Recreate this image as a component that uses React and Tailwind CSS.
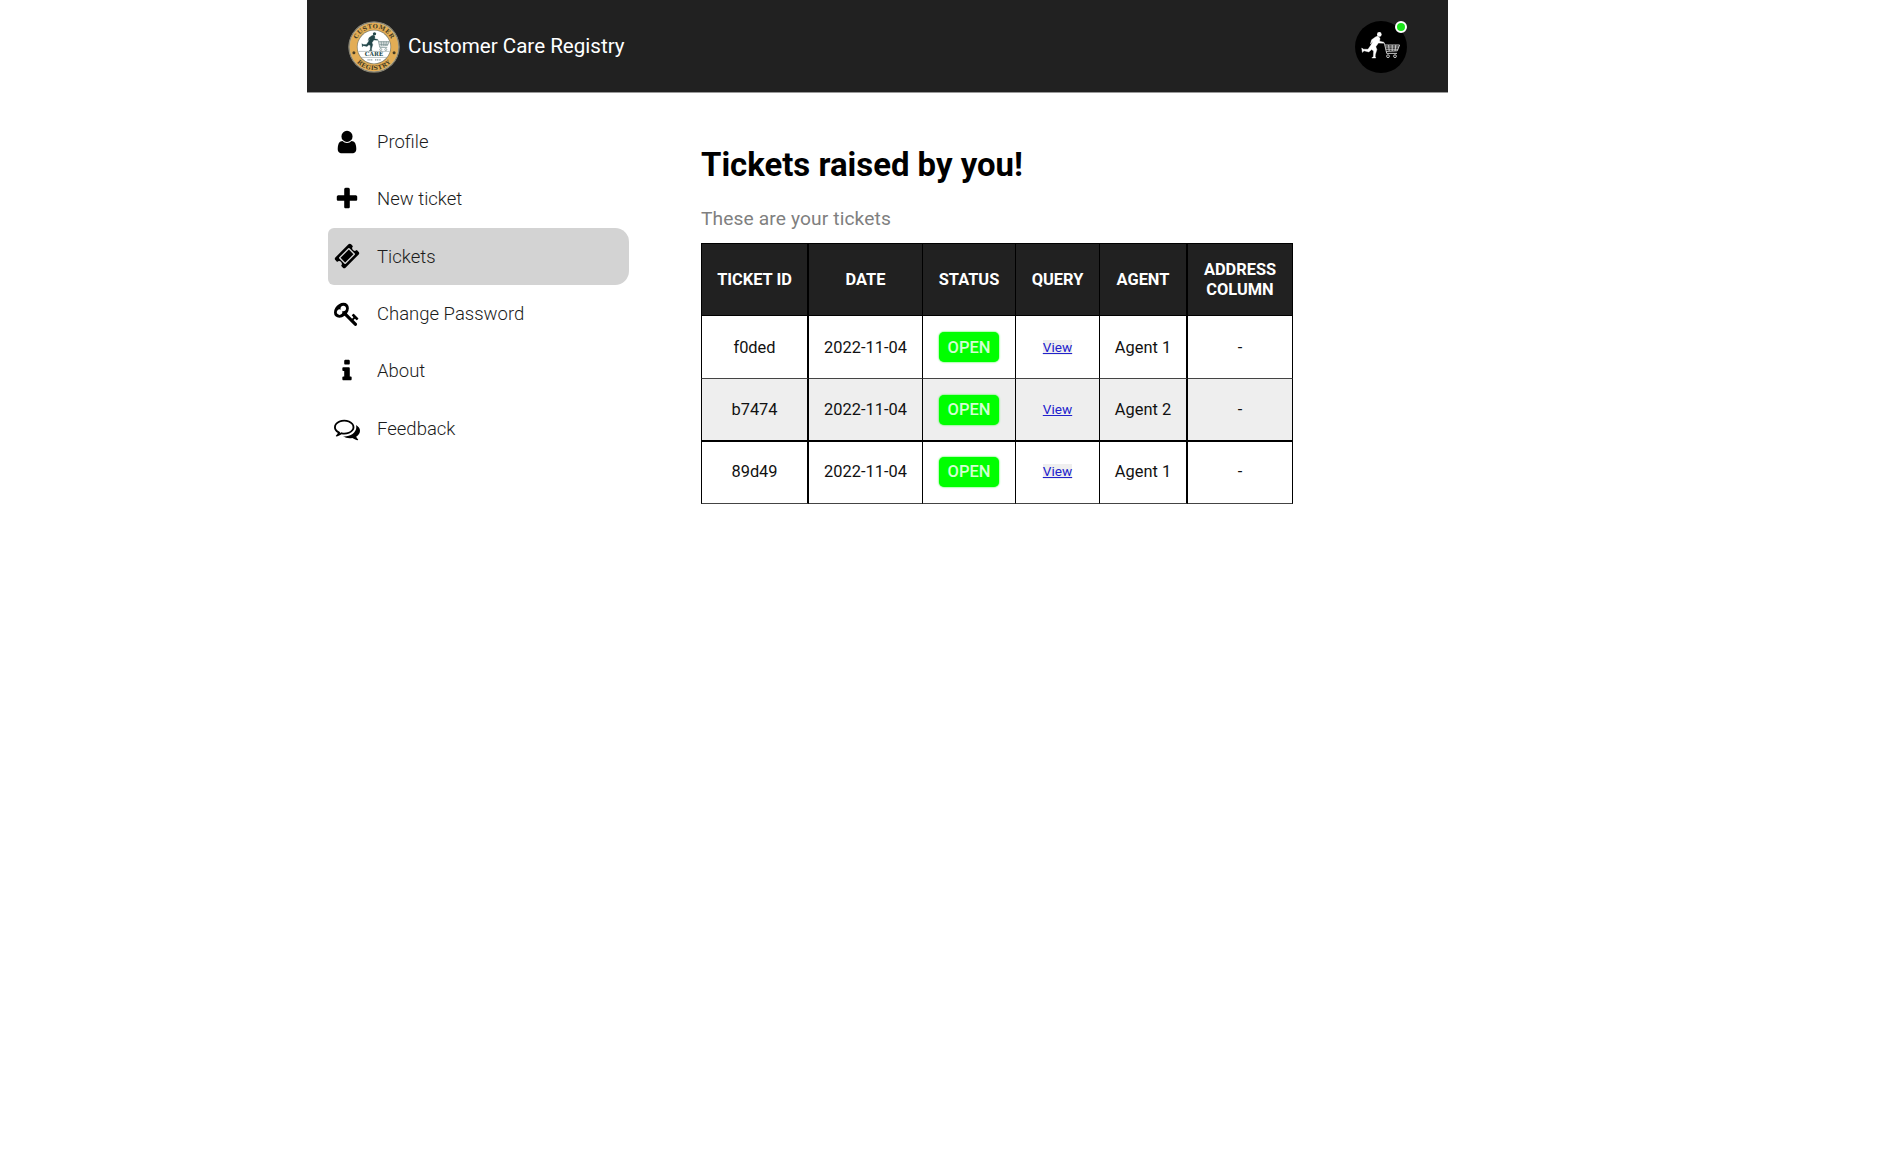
import React from "react";

const icons = {
  user: "M1536 1399q0 109-62.5 187t-150.5 78h-854q-88 0-150.5-78t-62.5-187q0-85 8.5-160.5t31.5-152 58.5-131 94-89 134.5-34.5q131 128 313 128t313-128q76 0 134.5 34.5t94 89 58.5 131 31.5 152 8.5 160.5zm-256-887q0 159-112.5 271.5t-271.5 112.5-271.5-112.5-112.5-271.5 112.5-271.5 271.5-112.5 271.5 112.5 112.5 271.5z",
  plus: "M1600 736v192q0 40-28 68t-68 28h-416v416q0 40-28 68t-68 28h-192q-40 0-68-28t-28-68v-416h-416q-40 0-68-28t-28-68v-192q0-40 28-68t68-28h416v-416q0-40 28-68t68-28h192q40 0 68 28t28 68v416h416q40 0 68 28t28 68z",
  ticket: "M1024 452l316 316-572 572-316-316zm-211 979l618-618q19-19 19-45t-19-45l-362-362q-18-18-45-18t-45 18l-618 618q-19 19-19 45t19 45l362 362q18 18 45 18t45-18zm889-637l-907 908q-37 37-90.5 37t-90.5-37l-126-126q56-56 56-136t-56-136-136-56-136 56l-125-126q-37-37-37-90.5t37-90.5l907-906q37-37 90.5-37t90.5 37l125 125q-56 56-56 136t56 136 136 56 136-56l126 125q37 37 37 90.5t-37 90.5z",
  key: "M832 512q0-80-56-136t-136-56-136 56-56 136q0 42 19 83-41-19-83-19-80 0-136 56t-56 136 56 136 136 56 136-56 56-136q0-42-19-83 41 19 83 19 80 0 136-56t56-136zm851 704q0 17-49 66t-66 49q-9 0-28.5-16t-36.5-33-38.5-40-24.5-26l-96 96 220 220q28 28 28 68 0 42-39 81t-81 39q-40 0-68-28l-671-671q-176 131-365 131-163 0-265.5-102.5t-102.5-265.5q0-160 95-313t248-248 313-95q163 0 265.5 102.5t102.5 265.5q0 189-131 365l355 355 96-96q-3-3-26-24.5t-40-38.5-33-36.5-16-28.5q0-17 49-66t66-49q13 0 23 10 6 6 46 44.5t82 79.5 86.5 86 73 78 28.5 41z",
  info: "M1216 1344v128q0 26-19 45t-45 19h-512q-26 0-45-19t-19-45v-128q0-26 19-45t45-19h64v-384h-64q-26 0-45-19t-19-45v-128q0-26 19-45t45-19h384q26 0 45 19t19 45v576h64q26 0 45 19t19 45zm-128-1152v192q0 26-19 45t-45 19h-256q-26 0-45-19t-19-45v-192q0-26 19-45t45-19h256q26 0 45 19t19 45z",
  comments: "M704 384q-153 0-286 52t-211.5 141-78.5 191q0 82 53 158t149 132l97 56-35 84q34-20 62-39l44-31 53 10q78 14 153 14 153 0 286-52t211.5-141 78.5-191-78.5-191-211.5-141-286-52zm0-128q191 0 353.5 68.5t256.5 186.5 94 257-94 257-256.5 186.5-353.5 68.5q-86 0-176-16-124 88-278 128-36 9-86 16h-3q-11 0-20.5-8t-11.5-21q-1-3-1-6.5t.5-6.5 2-6l2.5-5 3.5-5.5 4-5 4.5-5 4-4.5q5-6 23-25t26-29.5 22.5-29 25-38.5 20.5-44q-124-72-195-177t-71-224q0-139 94-257t256.5-186.5 353.5-68.5zm822 1169q10 24 20.5 44t25 38.5 22.5 29 26 29.5 23 25q1 1 4 4.5t4.5 5 4 5 3.5 5.5l2.5 5 2 6 .5 6.5-1 6.5q-3 14-13 22t-22 7q-50-7-86-16-154-40-278-128-90 16-176 16-271 0-472-132 58 4 88 4 161 0 309-45t264-129q125-92 192-212t67-254q0-77-23-152 129 71 204 178t75 230q0 120-71 224.5t-195 176.5z",
};

const menu = [
  { label: "Profile", icon: "user" },
  { label: "New ticket", icon: "plus" },
  { label: "Tickets", icon: "ticket", active: true },
  { label: "Change Password", icon: "key" },
  { label: "About", icon: "info" },
  { label: "Feedback", icon: "comments" },
];

const columns = [
  { title: "TICKET ID", cell: "w-[108px] border-l border-r-2" },
  { title: "DATE", cell: "w-[114px] border-r" },
  { title: "STATUS", cell: "w-[93px] border-r" },
  { title: "QUERY", cell: "w-[84px] border-r" },
  { title: "AGENT", cell: "w-[88px] border-r-2" },
  { title: "ADDRESS COLUMN", cell: "w-[105px] border-r" },
];

const tickets = [
  { id: "f0ded", date: "2022-11-04", agent: "Agent 1", row: "h-[63px]", line: "border-b border-b-[#444] pt-0 pb-0" },
  { id: "b7474", date: "2022-11-04", agent: "Agent 2", row: "h-[63px] bg-[#eeeeee]", line: "border-b-2 border-b-black pt-0 pb-0" },
  { id: "89d49", date: "2022-11-04", agent: "Agent 1", row: "h-[62px]", line: "border-b border-b-[#444] pt-0 pb-0.5" },
];

function Runner({ body, cart }) {
  return (
    <g>
      <circle cx="24.3" cy="13.4" r="2.3" fill={body} />
      <path
        d="M20.4 16L22.8 15L25 17.2L24.6 20.3L28.9 21.2V22.2L23.4 22L20.8 25.8L21.9 28.6L20.4 33.2L20.2 35.6L20.8 37H16.8L18.4 35.4L18.6 29.9L16.6 28.6L13.8 30.9L9 29.8L7.4 31.4L6.7 27L8.6 28.2L13 28.3L15.6 24.6L18 20L15.4 22.9L16.6 18.8Z"
        fill={body}
        stroke={body}
        strokeWidth="0.4"
        strokeLinejoin="round"
      />
      <path
        d="M28.4 21.4L29.4 22.2L31.7 32.4H42M29.8 24H44.6L42.3 29.8L31.2 30.4M30.3 26H44M30.8 28.2H43M33.6 24L34.2 30M37.2 24V30M40.8 24L40 30"
        fill="none"
        stroke={cart}
        strokeWidth="0.9"
      />
      <circle cx="33" cy="35.2" r="1.4" fill="none" stroke={cart} strokeWidth="0.9" />
      <circle cx="40" cy="35.2" r="1.4" fill="none" stroke={cart} strokeWidth="0.9" />
    </g>
  );
}

function Logo() {
  return (
    <svg className="mt-px size-[52px] shrink-0" viewBox="0 0 52 52">
      <defs>
        <path id="arc-top" d="M7.3 26A18.7 18.7 0 0 1 44.7 26" />
        <path id="arc-bottom" d="M3 26A23 23 0 0 0 49 26" />
      </defs>
      <circle cx="26" cy="26" r="25.6" fill="#b9b08f" />
      <circle cx="26" cy="26" r="25" fill="none" stroke="#55585a" strokeWidth="0.6" />
      <circle cx="26" cy="26" r="24.2" fill="#e3ad55" />
      <circle cx="26" cy="26" r="17.2" fill="#8b8469" />
      <circle cx="26" cy="26" r="16.4" fill="#ffffff" />
      <g
        fontFamily="'DejaVu Serif', serif"
        fontWeight="700"
        fill="#463d25"
        fontSize="6"
        textAnchor="middle"
      >
        <text letterSpacing="0.3">
          <textPath href="#arc-top" startOffset="50%">CUSTOMER</textPath>
        </text>
        <text letterSpacing="0.4">
          <textPath href="#arc-bottom" startOffset="50%">REGISTRY</textPath>
        </text>
        <text x="26" y="35.2" fontSize="5.8" fill="#23474a">CARE</text>
      </g>
      <g transform="translate(9 3.2) scale(0.72)">
        <Runner body="#23474a" cart="#6f8788" />
      </g>
      <path d="M10.6 30.4H41.4M13 36.4H39" stroke="#8d9c9c" strokeWidth="0.6" />
      <path d="M19.5 38.9H24.5M27 38.9H33" stroke="#8d9c9c" strokeWidth="1.2" strokeDasharray="1.2 0.6" />
      <circle cx="5.9" cy="31.8" r="1.5" fill="#463d25" />
      <circle cx="46.1" cy="31.8" r="1.5" fill="#463d25" />
    </svg>
  );
}

function Header() {
  return (
    <header className="flex h-[93px] items-center justify-between border-b border-[#999] bg-[#212121] pr-[41px] pl-[41px]">
      <div className="flex items-center gap-2">
        <Logo />
        <span className="text-[20.6px] leading-none text-white">Customer Care Registry</span>
      </div>
      <div className="relative mt-px size-[52px] rounded-full bg-black">
        <svg className="size-[52px]" viewBox="0 0 52 52">
          <Runner body="#ffffff" cart="#d8d8d8" />
        </svg>
        <span className="absolute top-0 right-0 size-3 rounded-full border-2 border-white bg-[#1ce61c]" />
      </div>
    </header>
  );
}

function Sidebar() {
  return (
    <nav className="ml-[21px] w-[301px] pt-5">
      {menu.map(({ label, icon, active }) => (
        <div
          key={label}
          className={
            "flex h-[57.4px] items-center gap-[17px] rounded-l-md rounded-r-[14px] pl-1.5 " +
            (active ? "bg-[#d3d3d3]" : "")
          }
        >
          <svg className="size-[26px] shrink-0 fill-black" viewBox="0 0 1792 1792">
            <path d={icons[icon]} />
          </svg>
          <span className="pt-0.5 text-[18.5px] font-light text-[#1c1c1c]">{label}</span>
        </div>
      ))}
    </nav>
  );
}

function TicketTable() {
  return (
    <table className="w-[592px] table-fixed border-separate border-spacing-0 text-center text-[16.4px] text-[#111]">
      <thead>
        <tr className="h-[73px] bg-[#212121] text-white">
          {columns.map((c) => (
            <th key={c.title} className={"border-y border-black px-3 py-0 leading-5 font-bold " + c.cell}>
              {c.title}
            </th>
          ))}
        </tr>
      </thead>
      <tbody>
        {tickets.map((t) => {
          const values = [
            <span className="block pt-0.5">{t.id}</span>,
            <span className="block pt-0.5">{t.date}</span>,
            <span className="inline-flex h-[30px] w-[60px] items-center justify-center rounded-[5px] bg-[#00ff00] pt-0.5 align-top text-[16.5px] font-medium text-[#d2ffd2] shadow-[0_0_2px_#00ff00]">
              OPEN
            </span>,
            <a className="mt-[3px] inline-block bg-[#efefef] text-[13.6px] leading-[15px] text-[#2222cc] underline">View</a>,
            <span className="block pt-0.5">{t.agent}</span>,
            <span className="block pt-0.5">-</span>,
          ];
          return (
            <tr key={t.id} className={t.row}>
              {values.map((v, i) => (
                <td key={i} className={"border-x-black px-0 " + t.line + " " + columns[i].cell}>
                  {v}
                </td>
              ))}
            </tr>
          );
        })}
      </tbody>
    </table>
  );
}

export default function App() {
  return (
    <div className="min-h-[1168px] bg-white font-[Roboto,sans-serif] text-black">
      <div className="ml-[307px] w-[1141px]">
        <Header />
        <div className="flex">
          <Sidebar />
          <main className="ml-[72px] pt-[50px]">
            <h1 className="text-[32.9px] leading-[44px] font-bold">Tickets raised by you!</h1>
            <p className="mt-[19px] mb-[11px] text-[19.2px] leading-[26px] tracking-[0.12px] text-[#808080]">
              These are your tickets
            </p>
            <TicketTable />
          </main>
        </div>
      </div>
    </div>
  );
}
